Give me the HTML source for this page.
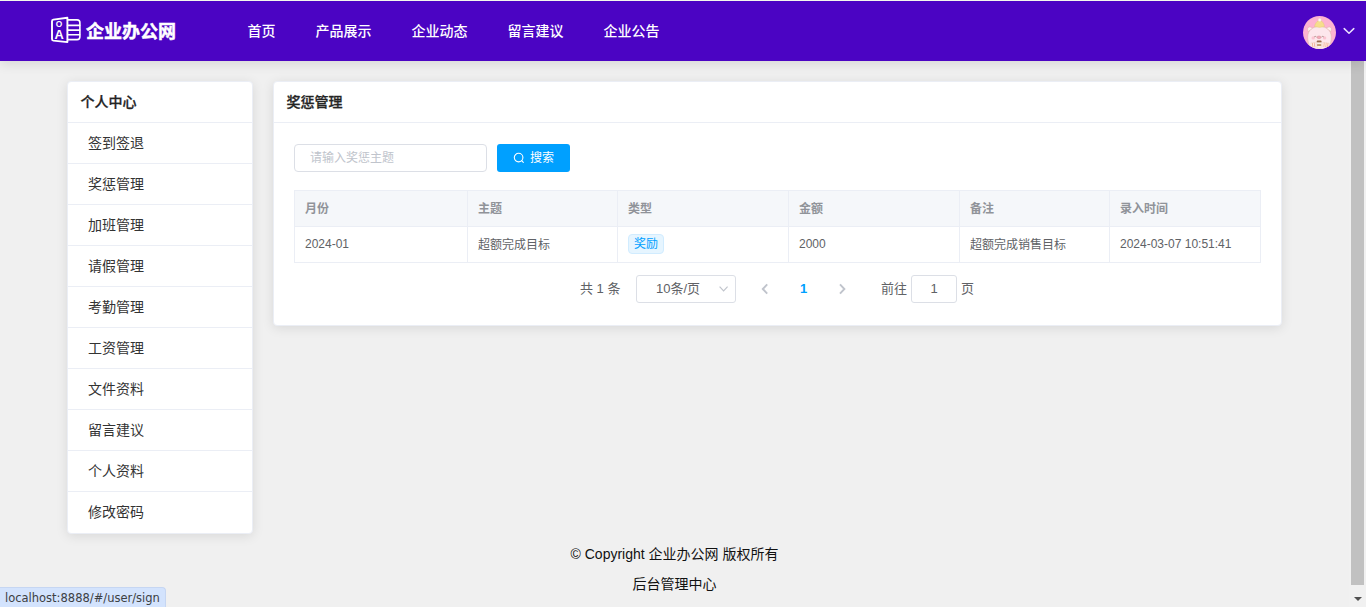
<!DOCTYPE html>
<html lang="zh-CN">
<head>
<meta charset="utf-8">
<title>企业办公网</title>
<style>
*{box-sizing:border-box;margin:0;padding:0}
html,body{width:1366px;height:607px;overflow:hidden;background:#f0f0f0}
body{position:relative;font-family:"Liberation Sans","Noto Sans CJK SC",sans-serif;font-size:14px;color:#333}
.topline{position:absolute;left:0;top:0;width:1366px;height:1px;background:#f3f9ec;z-index:5}
.header{position:absolute;left:0;top:1px;width:1366px;height:60px;background:#4b04c3;z-index:4;box-shadow:0 2px 12px 0 rgba(0,0,0,.12)}
.logo{position:absolute;left:50px;top:15px;width:32px;height:30px}
.brand{position:absolute;left:86px;top:1px;height:60px;line-height:60px;font-size:18px;font-weight:bold;color:#fff;-webkit-text-stroke:0.45px #fff}
.nav{position:absolute;left:227.5px;top:0;height:60px;display:flex}
.nav a{display:block;padding:0 20px;height:60px;line-height:60px;font-size:14px;font-weight:500;color:#fff;text-decoration:none;white-space:nowrap}
.avatar{position:absolute;left:1303px;top:15px;width:33px;height:33px}
.chev{position:absolute;left:1342px;top:25px;width:14px;height:10px}
.card{position:absolute;background:#fff;border:1px solid #ebeef5;border-radius:4px;box-shadow:0 2px 12px 0 rgba(0,0,0,.1)}
.side{left:67px;top:81px;width:186px;height:453px}
.side .t{height:41px;line-height:41px;padding-left:12.5px;font-weight:500;-webkit-text-stroke:0.3px #2b2b2b;border-bottom:1px solid #ebeef5;color:#222}
.side .i{height:41px;line-height:40.5px;padding-left:20px;border-bottom:1px solid #ebeef5;color:#333}
.side .i:last-child{border-bottom:0}
.main{left:273px;top:81px;width:1009px;height:245px}
.main .t{height:41px;line-height:41px;padding-left:12.5px;font-weight:500;-webkit-text-stroke:0.3px #2b2b2b;border-bottom:1px solid #ebeef5;color:#222}
.inp{position:absolute;left:20px;top:62px;width:193px;height:28px;border:1px solid #dcdfe6;border-radius:4px;font-size:12px;line-height:26px;padding-left:15px;color:#c0c4cc}
.btn{position:absolute;left:223px;top:62px;width:73px;height:28px;border-radius:3px;background:#00a0ff;color:#fff;font-size:12px;line-height:28px}
.btn svg{position:absolute;left:16px;top:7.5px;width:12px;height:12px}
.btn span{position:absolute;left:33px;top:0}
table{position:absolute;left:20px;top:108px;width:967px;border-collapse:collapse;table-layout:fixed;font-size:12px}
th,td{border:1px solid #ebeef5;height:36px;padding:0 0 0 10px;text-align:left;vertical-align:middle;white-space:nowrap}
th{background:#f5f7fa;color:#909399;font-weight:bold;padding-bottom:3px}
td{color:#606266;padding-bottom:2px}
.tag{display:inline-block;height:20px;line-height:18px;padding:0 5px;border:1px solid #d1ecff;background:#e6f5ff;color:#00a0ff;border-radius:4px;font-size:12px}
.pg{position:absolute;top:193px;left:0;width:1007px;height:28px;font-size:13px;color:#606266}
.pg>*{position:absolute;top:0;height:28px;line-height:28px}
.pg .sel{left:362px;width:100px;border:1px solid #dcdfe6;border-radius:3px;line-height:26px;padding-left:19px}
.pg .jump{left:637px;width:46px;border:1px solid #dcdfe6;border-radius:3px;line-height:26px;text-align:center}
.foot{position:absolute;left:0;width:1349px;text-align:center;font-size:14px;color:#111;line-height:20px}
.status{position:absolute;left:0;top:587px;width:166px;height:20px;background:#d3e3fd;border-top-right-radius:4px;border-top:1px solid #c6d6f2;border-right:1px solid #c6d6f2;font-family:"DejaVu Sans","Liberation Sans",sans-serif;font-size:11.5px;line-height:20px;padding-left:5px;color:#3c4043;white-space:nowrap;z-index:6}
.sb{position:absolute;left:1349px;top:61px;width:17px;height:546px;background:#f1f1f1}
.sb .th{position:absolute;left:2px;top:0;width:13px;height:524px;background:#c1c1c1}
.sb .ar{position:absolute;left:5px;top:536px;width:0;height:0;border-left:4px solid transparent;border-right:4px solid transparent;border-top:4px solid #505050}
</style>
</head>
<body>
<div class="topline"></div>
<div class="header">
  <svg class="logo" viewBox="0 0 32 30" fill="none" stroke="#fff" stroke-linejoin="round" stroke-linecap="round">
    <path stroke-width="1.9" d="M2 5.2 Q2 3.9 3.4 3.6 L17.4 1.8 L17.4 26.1 L3.4 24.6 Q2 24.4 2 23 Z"/>
    <path stroke-width="1.6" d="M17.6 3.9 H27.1 Q29.9 3.9 29.9 6.7 V20.8 Q29.9 23.6 27.1 23.6 H17.6"/>
    <path stroke-width="1.6" d="M17.6 9.4 H29.6 M17.6 14.1 H29.6 M17.6 18.8 H29.6"/>
    <text x="9.1" y="11.1" font-family="Liberation Sans, sans-serif" font-size="8.4" font-weight="bold" fill="#fff" stroke="none" text-anchor="middle">O</text>
    <text x="9" y="22.8" font-family="Liberation Sans, sans-serif" font-size="12.8" font-weight="bold" fill="#fff" stroke="none" text-anchor="middle">A</text>
  </svg>
  <div class="brand">企业办公网</div>
  <div class="nav"><a>首页</a><a>产品展示</a><a>企业动态</a><a>留言建议</a><a>企业公告</a></div>
  <svg class="avatar" viewBox="0 0 33 33">
    <defs><clipPath id="avc"><circle cx="16.5" cy="16.5" r="16.5"/></clipPath></defs>
    <circle cx="16.5" cy="16.5" r="16.5" fill="#fdb3d1"/>
    <g clip-path="url(#avc)">
      <path d="M5.2 15.6 Q3.6 11.2 6.6 10.9 Q8.4 10.8 9.8 12.4 Z" fill="#fff0f1" stroke="#dcb9a6" stroke-width=".5"/>
      <path d="M27.8 15.6 Q29.4 11.2 26.4 10.9 Q24.6 10.8 23.2 12.4 Z" fill="#fff0f1" stroke="#dcb9a6" stroke-width=".5"/>
      <path d="M16.5 10.4 C23.5 10.4 28.3 14.6 28.3 21 C28.3 25 27.4 27.5 26.6 29.5 L25.5 34 H7.5 L6.4 29.5 C5.6 27.5 4.7 25 4.7 21 C4.7 14.6 9.5 10.4 16.5 10.4 Z" fill="#fde7ec" stroke="#dcb9a6" stroke-width=".5"/>
      <path d="M11.4 10.6 C12.2 7.6 14 4.6 16.7 4.6 C19.4 4.6 20.9 7.6 21.6 10.6 Q16.5 12.2 11.4 10.6 Z" fill="#f6de8c" stroke="#e0c67c" stroke-width=".4"/>
      <circle cx="16.7" cy="3.9" r="1.55" fill="#fffaf2" stroke="#e6d6c2" stroke-width=".3"/>
      <circle cx="10.2" cy="21.9" r="1.7" fill="#fbc5d1"/><circle cx="21.6" cy="21.9" r="1.7" fill="#fbc5d1"/>
      <path d="M11.5 20.6 q.8 -.7 1.6 0 M18.9 20.6 q.8 -.7 1.6 0" stroke="#7a5a4a" stroke-width=".55" fill="none" stroke-linecap="round"/>
      <ellipse cx="16" cy="21.3" rx="2" ry="1.35" fill="#f5aab8" stroke="#c98a8e" stroke-width=".4"/>
      <path d="M7.8 27 L12.6 26.4 L12.9 30.4 L8.6 31.4 Z" fill="#fff6f0" stroke="#e3c4b2" stroke-width=".3"/>
      <path d="M9.3 26.9 L9.9 31 M11.2 26.6 L11.7 30.6" stroke="#f0a08a" stroke-width=".8"/>
      <path d="M19.6 26.4 L26.2 27 L25.2 31.4 L19.4 30.4 Z" fill="#fff6f0" stroke="#e3c4b2" stroke-width=".3"/>
      <path d="M21.2 26.6 L20.9 30.6 M23.2 26.8 L22.8 31 M25 27 L24.4 31.2" stroke="#f0a08a" stroke-width=".8"/>
      <rect x="13.7" y="24.6" width="4.9" height="2.1" rx=".9" fill="#9a6a49"/>
      <path d="M13.9 26.6 H18.4 L18 32.2 H14.3 Z" fill="#fbf3e8" stroke="#d9c2ae" stroke-width=".3"/>
      <rect x="14.1" y="28.1" width="4.1" height="1.9" fill="#c39a74"/>
    </g>
  </svg>
  <svg class="chev" viewBox="0 0 14 10" fill="none" stroke="#eadfff" stroke-width="1.5" stroke-linecap="round" stroke-linejoin="round"><path d="M2.2 2.6 L7 7.3 L11.8 2.6"/></svg>
</div>

<div class="card side">
  <div class="t">个人中心</div>
  <div class="i">签到签退</div><div class="i">奖惩管理</div><div class="i">加班管理</div><div class="i">请假管理</div><div class="i">考勤管理</div>
  <div class="i">工资管理</div><div class="i">文件资料</div><div class="i">留言建议</div><div class="i">个人资料</div><div class="i">修改密码</div>
</div>

<div class="card main">
  <div class="t">奖惩管理</div>
  <div class="inp">请输入奖惩主题</div>
  <div class="btn"><svg viewBox="0 0 12 12" fill="none" stroke="#fff" stroke-width="1.1" stroke-linecap="round"><circle cx="5.6" cy="5.6" r="4.3"/><path d="M8.9 8.9 L10.3 10.3"/></svg><span>搜索</span></div>
  <table>
    <colgroup><col style="width:173px"><col style="width:150px"><col style="width:171px"><col style="width:171px"><col style="width:150px"><col style="width:151px"></colgroup>
    <tr><th>月份</th><th>主题</th><th>类型</th><th>金额</th><th>备注</th><th>录入时间</th></tr>
    <tr><td>2024-01</td><td>超额完成目标</td><td><span class="tag">奖励</span></td><td>2000</td><td>超额完成销售目标</td><td>2024-03-07 10:51:41</td></tr>
  </table>
  <div class="pg">
    <span style="left:306px">共 1 条</span>
    <span class="sel">10条/页</span>
    <svg style="left:444px;top:9px;height:10px;width:10px" viewBox="0 0 10 10" fill="none" stroke="#c0c4cc" stroke-width="1.2"><path d="M1.6 2.6 L5.6 6.8 L9.6 2.6"/></svg>
    <svg style="left:486px;top:8px;height:12px;width:10px" viewBox="0 0 10 12" fill="none" stroke="#c0c4cc" stroke-width="1.9"><path d="M7.2 1.3 L2.8 6 L7.2 10.7"/></svg>
    <span style="left:526px;color:#00a0ff;font-weight:bold">1</span>
    <svg style="left:563px;top:8px;height:12px;width:10px" viewBox="0 0 10 12" fill="none" stroke="#c0c4cc" stroke-width="1.9"><path d="M3 1.3 L7.4 6 L3 10.7"/></svg>
    <span style="left:607px">前往</span>
    <span class="jump">1</span>
    <span style="left:687px">页</span>
  </div>
</div>

<div class="foot" style="top:544px">© Copyright 企业办公网 版权所有</div>
<div class="foot" style="top:574px">后台管理中心</div>

<div class="sb"><div class="th"></div><div class="ar"></div></div>
<div class="status">localhost:8888/#/user/sign</div>
</body>
</html>
